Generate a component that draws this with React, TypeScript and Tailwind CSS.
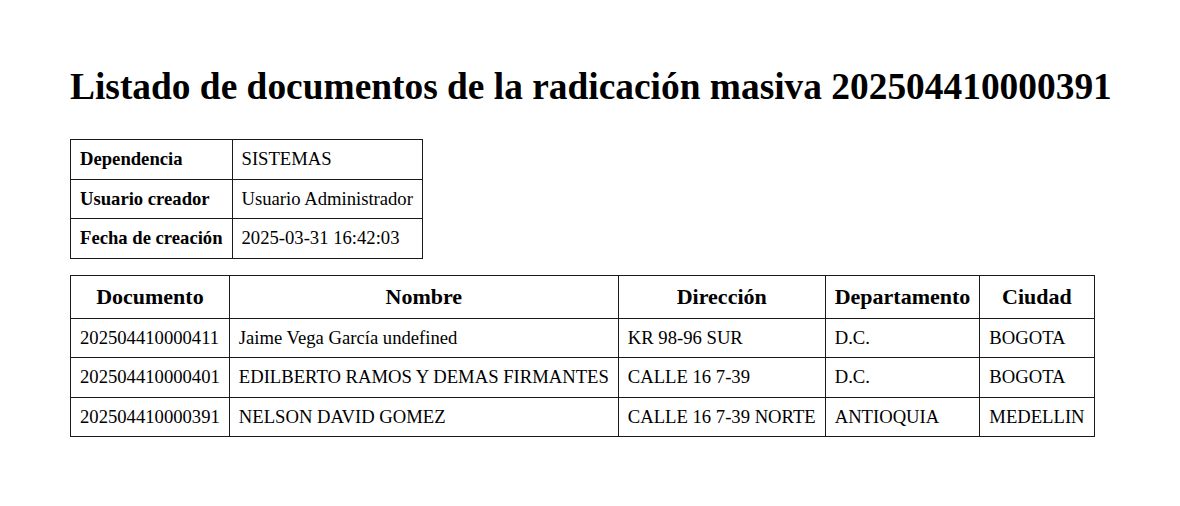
import React from "react";

const info = [
  ["Dependencia", "SISTEMAS"],
  ["Usuario creador", "Usuario Administrador"],
  ["Fecha de creación", "2025-03-31 16:42:03"],
];

const docs = [
  ["202504410000411", "Jaime Vega García undefined", "KR 98-96 SUR", "D.C.", "BOGOTA"],
  ["202504410000401", "EDILBERTO RAMOS Y DEMAS FIRMANTES", "CALLE 16 7-39", "D.C.", "BOGOTA"],
  ["202504410000391", "NELSON DAVID GOMEZ", "CALLE 16 7-39 NORTE", "ANTIOQUIA", "MEDELLIN"],
];

const heads = ["Documento", "Nombre", "Dirección", "Departamento", "Ciudad"];

const App = () => {
  return (
    <div className="min-h-[506px] bg-white px-[70px] pt-[65px] text-black [font-family:'Liberation_Serif','Times_New_Roman',serif]">
      <h1 className="whitespace-nowrap text-[37.4px] font-bold leading-[43px] mb-[31px]">
        Listado de documentos de la radicación masiva 202504410000391
      </h1>

      {/* datos generales de la radicacion */}
      <table className="border-collapse text-[18.65px] leading-[20.5px]">
        <tbody>
          {info.map(([k, v]) => (
            <tr key={k}>
              <td className="border border-[#1a1a1a] px-[9px] py-[9px] font-bold">{k}</td>
              <td className="border border-[#1a1a1a] px-[9px] py-[9px]">{v}</td>
            </tr>
          ))}
        </tbody>
      </table>

      <table className="mt-[16px] border-collapse text-[18.65px] leading-[20.5px]">
        <thead>
          <tr>
            {heads.map((h) => (
              <th key={h} className="border border-[#1a1a1a] px-[9px] py-[9px] text-[22px] leading-[24px] font-bold">
                {h}
              </th>
            ))}
          </tr>
        </thead>
        <tbody>
          {docs.map((row) => (
            <tr key={row[0]}>
              {row.map((c, i) => (
                <td key={i} className="border border-[#1a1a1a] px-[9px] py-[9px] text-left">
                  {c}
                </td>
              ))}
            </tr>
          ))}
        </tbody>
      </table>
    </div>
  );
};

export default App;
